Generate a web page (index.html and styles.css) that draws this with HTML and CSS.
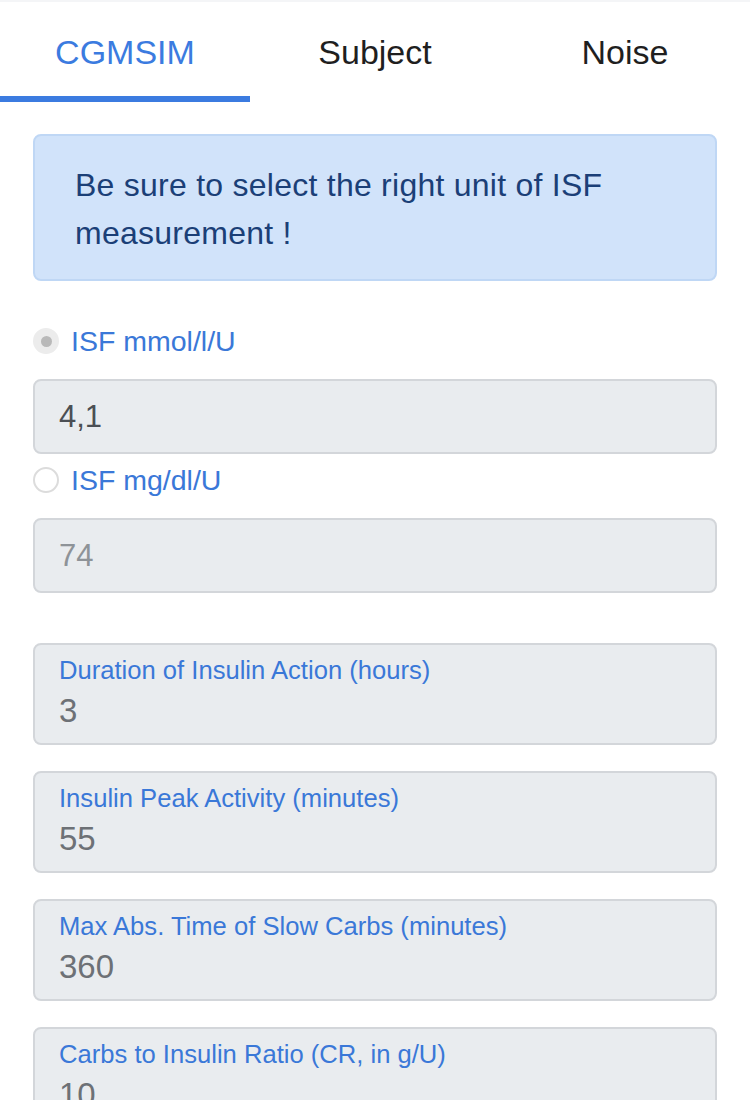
FILE: index.html
```html
<!DOCTYPE html>
<html>
<head>
<meta charset="utf-8">
<link rel="stylesheet" href="styles.css">
</head>
<body>
<nav class="tabs">
  <div class="tab active">CGMSIM</div>
  <div class="tab">Subject</div>
  <div class="tab">Noise</div>
</nav>
<main class="content">
  <div class="alert">Be sure to select the right unit of ISF measurement !</div>

  <label class="radio-row">
    <span class="radio checked-disabled"></span>
    <span class="radio-label">ISF mmol/l/U</span>
  </label>
  <div class="input"><span class="value dark">4,1</span></div>

  <label class="radio-row second">
    <span class="radio"></span>
    <span class="radio-label">ISF mg/dl/U</span>
  </label>
  <div class="input"><span class="value light">74</span></div>

  <div class="fields">
    <div class="field">
      <div class="field-label">Duration of Insulin Action (hours)</div>
      <div class="field-value">3</div>
    </div>
    <div class="field">
      <div class="field-label">Insulin Peak Activity (minutes)</div>
      <div class="field-value">55</div>
    </div>
    <div class="field">
      <div class="field-label">Max Abs. Time of Slow Carbs (minutes)</div>
      <div class="field-value">360</div>
    </div>
    <div class="field">
      <div class="field-label">Carbs to Insulin Ratio (CR, in g/U)</div>
      <div class="field-value">10</div>
    </div>
  </div>
</main>
</body>
</html>
```
FILE: styles.css
```css
* { box-sizing: border-box; }
html, body {
  margin: 0;
  padding: 0;
  background: #fff;
  font-family: "Liberation Sans", Arial, sans-serif;
  overflow: hidden;
  height: 1100px;
}
.tabs {
  display: flex;
  height: 102px;
  border-top: 2px solid #f4f5f7;
}
.tab {
  flex: 1;
  display: flex;
  align-items: center;
  justify-content: center;
  padding-top: 6px;
  font-size: 34px;
  color: #1f1f1f;
  border-bottom: 6px solid transparent;
}
.tab.active {
  color: #3b7be0;
  border-bottom-color: #3b7be0;
}
.content {
  padding: 32px 33px 0 33px;
}
.alert {
  background: #d1e3fa;
  border: 2px solid #bfd7f5;
  border-radius: 8px;
  color: #1b3f77;
  font-size: 32px;
  letter-spacing: 0.25px;
  line-height: 48px;
  padding: 25px 40px 22px 40px;
}
.radio-row {
  display: flex;
  align-items: center;
  margin-top: 40px;
  height: 40px;
}
.radio-row.second {
  margin-top: 6px;
}
.radio {
  width: 26px;
  height: 26px;
  border-radius: 50%;
  border: 2px solid #dcdcdc;
  background: #fff;
  margin-right: 12px;
  display: flex;
  align-items: center;
  justify-content: center;
}
.radio.checked-disabled {
  background: #ececec;
  border-color: #ececec;
}
.radio.checked-disabled::after {
  content: "";
  width: 11px;
  height: 11px;
  border-radius: 50%;
  background: #b9b9b9;
}
.radio-label {
  color: #3a78d8;
  font-size: 28.5px;
}
.input {
  margin-top: 18px;
  height: 75px;
  background: #e9ecef;
  border: 2px solid #d3d6da;
  border-radius: 8px;
  display: flex;
  align-items: center;
  padding-left: 24px;
  font-size: 31px;
}
.value.dark { color: #4b4f54; }
.value.light { color: #8e9398; }
.fields {
  margin-top: 50px;
  display: flex;
  flex-direction: column;
  gap: 26px;
}
.field {
  height: 102px;
  background: #e9ecef;
  border: 2px solid #d3d6da;
  border-radius: 8px;
  padding: 10px 24px 0 24px;
}
.field-label {
  color: #3a78d8;
  font-size: 25.6px;
  line-height: 30px;
}
.field-value {
  color: #6d7176;
  font-size: 33px;
  line-height: 40px;
  margin-top: 6px;
}
```
